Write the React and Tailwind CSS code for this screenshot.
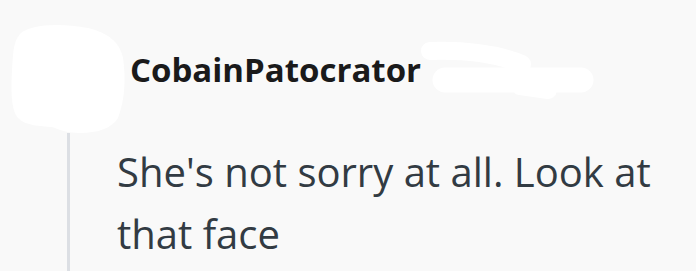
import React from 'react';

function AvatarBlob() {
  return (
    <svg width="120" height="116" viewBox="8 20 120 116" className="shrink-0">
      <path
        d="M20,34 C30,24 60,23 88,28 C108,33 120,42 123,58 C126,78 125,100 118,118 C112,128 98,133 80,133 C68,133 60,130 52,127 C40,126 26,126 18,118 C11,110 11,90 12,70 C13,54 13,42 20,34 Z"
        fill="#ffffff"
      />
    </svg>
  );
}

function NameBlob() {
  return (
    <svg width="180" height="66" viewBox="418 38 180 66" className="shrink-0">
      <g fill="none" stroke="#ffffff" strokeLinecap="round">
        <path d="M430,51 C460,50 495,53 522,64" strokeWidth="18" />
        <path d="M445,80 L581,80" strokeWidth="25" />
        <path d="M520,86 L548,90" strokeWidth="18" />
      </g>
    </svg>
  );
}

export default function App() {
  const font = { fontFamily: '"Open Sans", "Noto Sans", sans-serif' };

  return (
    <div className="w-[696px] h-[271px] bg-[#f9f9f9] overflow-hidden flex flex-col" style={font}>
      <div className="flex items-start pt-[20px] pl-[8px]">
        <AvatarBlob />
        <div className="mt-[30px] ml-[2px] text-[33px] leading-[40px] font-bold text-[#1a1a1b] whitespace-nowrap">
          CobainPatocrator
        </div>
        <div className="mt-[18px] -ml-[3px]">
          <NameBlob />
        </div>
      </div>
      <div className="flex flex-1 min-h-0 -mt-[3px]">
        <div className="ml-[67px] w-[3px] bg-[#dcdfe4] shrink-0" />
        <p className="ml-[47px] pr-[16px] pt-[8px] text-[40px] leading-[62px] text-[#323b43]">
          She's not sorry at all. Look at that face
        </p>
      </div>
    </div>
  );
}
